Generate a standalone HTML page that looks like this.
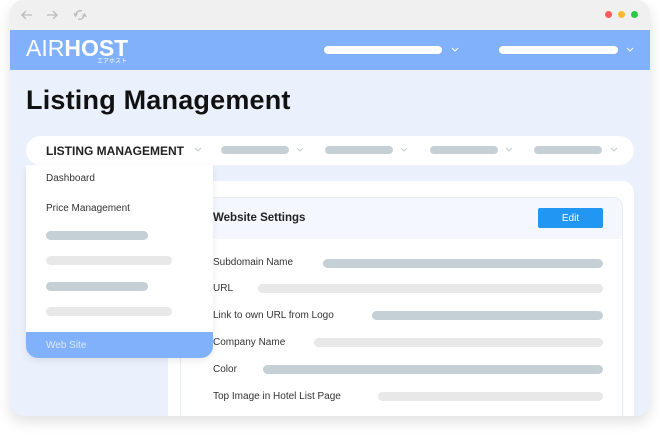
<!DOCTYPE html>
<html><head><meta charset="utf-8"><style>
*{margin:0;padding:0;box-sizing:border-box}
body{width:660px;height:436px;background:#fff;position:relative;overflow:hidden;font-family:"Liberation Sans","Noto Sans CJK JP",sans-serif}
.a{position:absolute}
.bar{position:absolute;height:9px;border-radius:5px}
.g{background:#c5d0d6}.l{background:#e8e8e8}
.lab{position:absolute;font-size:10px;color:#333;left:213px}
</style></head><body>
<div class="a" style="left:10px;top:0;width:640px;height:416px;border-radius:14px;background:#eaf1fd;box-shadow:0 6px 14px rgba(0,0,0,0.12);overflow:hidden">
 <div class="a" style="left:0;top:0;width:640px;height:30px;background:#f0f0f0"></div>
 <div class="a" style="left:0;top:30px;width:640px;height:40px;background:#82b1fc"></div>
</div>
<svg class="a" style="left:18px;top:7px" width="75" height="16" fill="none" stroke="#bbb" stroke-width="1.3">
 <path d="M14 8H4M8 4L4 8l4 4"/><path d="M29 8h10M35 4l4 4-4 4"/>
 <path d="M64 4a4.5 4.5 0 0 0-6 5M60 12a4.5 4.5 0 0 0 6-5M56 6l1.5 3 2-2.5M68 10l-1.5-3-2 2.5"/>
</svg>
<div class="a" style="left:605px;top:11px;width:7px;height:7px;border-radius:50%;background:#fd5c5c"></div>
<div class="a" style="left:618px;top:11px;width:7px;height:7px;border-radius:50%;background:#fdb92e"></div>
<div class="a" style="left:631px;top:11px;width:7px;height:7px;border-radius:50%;background:#2dc842"></div>
<div class="a" style="left:26px;top:35px;color:#fff;font-size:23px;letter-spacing:0"><span style="font-weight:300">AIR</span><b>HOST</b></div>
<div class="a" style="left:97px;top:56px;color:#fff;font-size:6px">エアホスト</div>
<div class="a" style="left:324px;top:46px;width:118px;height:8px;border-radius:4px;background:#fff"></div>
<div class="a" style="left:499px;top:46px;width:119px;height:8px;border-radius:4px;background:#fff"></div>
<svg class="a" style="left:450px;top:46px" width="10" height="8" stroke="#fff" fill="none"><path d="M2 2l3 3 3-3"/></svg>
<svg class="a" style="left:625px;top:46px" width="10" height="8" stroke="#fff" fill="none"><path d="M2 2l3 3 3-3"/></svg>
<div class="a" style="left:26px;top:85px;font-size:27px;font-weight:bold;color:#111;letter-spacing:0.2px">Listing Management</div>
<div class="a" style="left:26px;top:136px;width:608px;height:29px;border-radius:15px;background:#fff"></div>
<div class="a" style="left:46px;top:144px;font-size:12px;font-weight:bold;color:#222">LISTING MANAGEMENT</div>
<div class="bar g" style="left:221px;top:146px;width:68px;height:8px"></div>
<div class="bar g" style="left:325px;top:146px;width:68px;height:8px"></div>
<div class="bar g" style="left:430px;top:146px;width:68px;height:8px"></div>
<div class="bar g" style="left:534px;top:146px;width:68px;height:8px"></div>
<svg class="a" style="left:0;top:145px" width="660" height="10" stroke="#c5ccd2" fill="none">
<path d="M195 3l3 3 3-3M297 3l3 3 3-3M401 3l3 3 3-3M506 3l3 3 3-3M611 3l3 3 3-3"/></svg>
<div class="a" style="left:168px;top:181px;width:466px;height:235px;border-radius:12px 12px 0 0;background:#fff"></div>
<div class="a" style="left:180px;top:197px;width:443px;height:219px;border:1px solid #e6ecf4;border-bottom:none;border-radius:10px 10px 0 0;background:#fff;overflow:hidden">
 <div style="height:41px;background:#f4f8fe"></div>
</div>
<div class="a" style="left:213px;top:212px;font-size:11.5px;font-weight:bold;color:#222">Website Settings</div>
<div class="a" style="left:538px;top:208px;width:65px;height:20px;border-radius:2px;background:#2196f3;color:#fff;font-size:10px;text-align:center;line-height:21px">Edit</div>
<div class="lab" style="top:257px">Subdomain Name</div><div class="bar g" style="left:323px;top:259px;width:280px"></div>
<div class="lab" style="top:283px">URL</div><div class="bar l" style="left:258px;top:284px;width:345px"></div>
<div class="lab" style="top:310px">Link to own URL from Logo</div><div class="bar g" style="left:372px;top:311px;width:231px"></div>
<div class="lab" style="top:337px">Company Name</div><div class="bar l" style="left:314px;top:338px;width:289px"></div>
<div class="lab" style="top:364px">Color</div><div class="bar g" style="left:263px;top:365px;width:340px"></div>
<div class="lab" style="top:391px">Top Image in Hotel List Page</div><div class="bar l" style="left:378px;top:392px;width:225px"></div>
<div class="a" style="left:26px;top:165px;width:187px;height:193px;background:#fff;border-radius:0 0 12px 12px;overflow:hidden;box-shadow:0 3px 8px rgba(0,0,0,0.08)">
 <div class="a" style="left:0;top:167px;width:187px;height:26px;background:#82b1fc"></div>
</div>
<div class="a" style="left:46px;top:173px;font-size:10px;color:#333">Dashboard</div>
<div class="a" style="left:46px;top:203px;font-size:10px;color:#333">Price Management</div>
<div class="bar g" style="left:46px;top:231px;width:102px"></div>
<div class="bar l" style="left:46px;top:256px;width:126px"></div>
<div class="bar g" style="left:46px;top:282px;width:102px"></div>
<div class="bar l" style="left:46px;top:307px;width:126px"></div>
<div class="a" style="left:46px;top:340px;font-size:10px;color:#dce8fd">Web Site</div>
</body></html>
